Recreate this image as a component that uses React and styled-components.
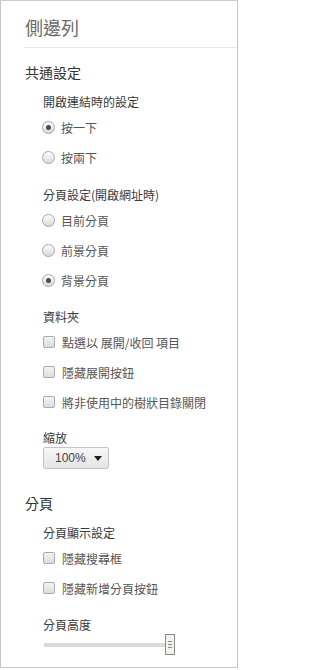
import React from "react";
import styled, { createGlobalStyle } from "styled-components";

const Global = createGlobalStyle`
  html, body { margin: 0; padding: 0; background: #fff; }
  body { font-family: "Noto Sans CJK TC", "Noto Sans", sans-serif; }
`;

const Frame = styled.div`
  width: 238px;
  height: 668px;
  box-sizing: border-box;
  border: 1px solid #c6c6c6;
  border-top-color: #cfcfcf;
  display: flex;
  flex-direction: column;
  overflow: hidden;
`;

const Header = styled.div`
  margin-left: 23px;
  padding-top: 14px;
  height: 32px;
  border-bottom: 1px solid #e6e6e6;
  display: flex;
  align-items: flex-start;
`;

const Title = styled.h1`
  margin: 0;
  font-size: 18px;
  line-height: 24px;
  font-weight: 400;
  color: #6a6a6a;
  padding-left: 1px;
`;

const Section = styled.section`
  padding-left: 24px;
  display: flex;
  flex-direction: column;
  margin-top: ${(p) => p.$mt}px;
`;

const SectionTitle = styled.h2`
  margin: 0;
  font-size: 14px;
  line-height: 20px;
  font-weight: 400;
  color: #333;
`;

const Group = styled.div`
  padding-left: 18px;
  display: flex;
  flex-direction: column;
  margin-top: ${(p) => p.$mt}px;
`;

const GroupLabel = styled.div`
  font-size: 12px;
  line-height: ${(p) => p.$lh || 20}px;
  color: #383838;
`;

const Row = styled.label`
  height: 30px;
  display: flex;
  align-items: center;
  gap: 7px;
  font-size: 12px;
  color: #555;
`;

const Radio = styled.span`
  width: 13px;
  height: 13px;
  box-sizing: border-box;
  border-radius: 50%;
  border: 1px solid #a8a8a8;
  background: linear-gradient(#fdfdfd, #dadada);
  box-shadow: 0 0 1px rgba(0,0,0,0.1);
  display: flex;
  align-items: center;
  justify-content: center;
  flex: none;
  margin-left: -1px;
  margin-right: -1px;
  &::after {
    content: "";
    width: 5px;
    height: 5px;
    border-radius: 50%;
    background: ${(p) => (p.$checked ? "#4d4d4d" : "transparent")};
  }
`;

const Check = styled.span`
  width: 12px;
  height: 12px;
  box-sizing: border-box;
  border-radius: 2px;
  border: 1px solid #ababab;
  background: linear-gradient(#f4f4f4, #dcdcdc);
  flex: none;
`;

const Select = styled.div`
  width: 66px;
  height: 22px;
  box-sizing: border-box;
  border: 1px solid #c4c4c4;
  border-radius: 2px;
  background: linear-gradient(#f7f7f7, #e4e4e4);
  display: flex;
  align-items: center;
  justify-content: space-between;
  padding: 0 6px 0 11px;
  font-family: "Liberation Sans", Arial, sans-serif;
  font-size: 12px;
  color: #444;
`;

const Arrow = styled.span`
  width: 0;
  height: 0;
  border-left: 4.5px solid transparent;
  border-right: 4.5px solid transparent;
  border-top: 5px solid #1e1e1e;
`;

const Slider = styled.div`
  width: 131px;
  height: 21px;
  display: flex;
  align-items: center;
  margin-left: 1px;
`;

const Track = styled.div`
  flex: 1;
  height: 4px;
  background: #dedbd6;
`;

const Thumb = styled.div`
  width: 10px;
  height: 21px;
  box-sizing: border-box;
  border: 1px solid #8c8c8c;
  background: #f1f1ee;
  display: flex;
  flex-direction: column;
  align-items: center;
  justify-content: center;
  gap: 2px;
  & > i {
    display: block;
    width: 4px;
    height: 1px;
    background: #8a8a8a;
  }
`;

const RadioRow = ({ checked, children }) => (
  <Row>
    <Radio $checked={checked} />
    {children}
  </Row>
);

const CheckRow = ({ children }) => (
  <Row>
    <Check />
    {children}
  </Row>
);

export default function App() {
  return (
    <>
      <Global />
      <Frame>
        <Header>
          <Title>側邊列</Title>
        </Header>
        <Section $mt={14}>
          <SectionTitle>共通設定</SectionTitle>
          <Group $mt={10}>
            <GroupLabel>開啟連結時的設定</GroupLabel>
            <RadioRow checked>按一下</RadioRow>
            <RadioRow>按兩下</RadioRow>
          </Group>
          <Group $mt={13}>
            <GroupLabel>分頁設定(開啟網址時)</GroupLabel>
            <RadioRow>目前分頁</RadioRow>
            <RadioRow>前景分頁</RadioRow>
            <RadioRow checked>背景分頁</RadioRow>
          </Group>
          <Group $mt={12}>
            <GroupLabel>資料夾</GroupLabel>
            <CheckRow>點選以 展開/收回 項目</CheckRow>
            <CheckRow>隱藏展開按鈕</CheckRow>
            <CheckRow>將非使用中的樹狀目錄關閉</CheckRow>
          </Group>
          <Group $mt={12}>
            <GroupLabel $lh={18}>縮放</GroupLabel>
            <Select>
              100%
              <Arrow />
            </Select>
          </Group>
        </Section>
        <Section $mt={24}>
          <SectionTitle>分頁</SectionTitle>
          <Group $mt={10}>
            <GroupLabel>分頁顯示設定</GroupLabel>
            <CheckRow>隱藏搜尋框</CheckRow>
            <CheckRow>隱藏新增分頁按鈕</CheckRow>
          </Group>
          <Group $mt={13}>
            <GroupLabel $lh={18}>分頁高度</GroupLabel>
            <Slider>
              <Track />
              <Thumb>
                <i />
                <i />
                <i />
              </Thumb>
            </Slider>
          </Group>
        </Section>
      </Frame>
    </>
  );
}
